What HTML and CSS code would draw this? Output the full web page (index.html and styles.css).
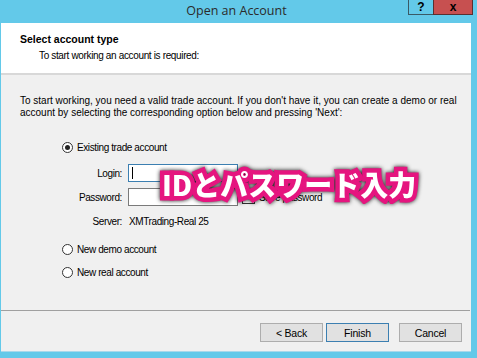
FILE: index.html
```html
<!DOCTYPE html>
<html lang="ja">
<head>
    <meta charset="UTF-8">
    <meta name="viewport" content="width=device-width, initial-scale=1.0">
    <title>Open an Account</title>
    <link rel="stylesheet" href="styles.css">
</head>
<body>
    <div class="window">
        <div class="titlebar">
            <span class="title">Open an Account</span>
            <div class="caption-buttons">
                <span class="cap-btn help">?</span>
                <span class="cap-btn close">x</span>
            </div>
        </div>
        <div class="client">
            <div class="header">
                <div class="header-title">Select account type</div>
                <div class="header-sub">To start working an account is required:</div>
            </div>
            <div class="body">
                <p class="intro">To start working, you need a valid trade account. If you don't have it, you can create a demo or real<br>account by selecting the corresponding option below and pressing 'Next':</p>
                <div class="options">
                    <label class="radio-row"><span class="radio checked"></span>Existing trade account</label>
                    <div class="fields">
                        <div class="field-row">
                            <span class="field-label">Login:</span>
                            <span class="input focused"><span class="caret"></span></span>
                        </div>
                        <div class="field-row">
                            <span class="field-label">Password:</span>
                            <span class="input"></span>
                            <span class="check"></span>
                            <span class="check-label">Save password</span>
                        </div>
                        <div class="field-row">
                            <span class="field-label">Server:</span>
                            <span class="server">XMTrading-Real 25</span>
                        </div>
                    </div>
                    <label class="radio-row gap-top"><span class="radio"></span>New demo account</label>
                    <label class="radio-row"><span class="radio"></span>New real account</label>
                </div>
            </div>
            <div class="footer">
                <button class="btn">&lt; Back</button>
                <button class="btn default">Finish</button>
                <button class="btn cancel">Cancel</button>
            </div>
        </div>
        <div class="overlay">IDとパスワード入力</div>
    </div>
</body>
</html>
```

FILE: styles.css
```css
* {
    margin: 0;
    padding: 0;
    box-sizing: border-box;
}
body, html {
    width: 477px;
    height: 358px;
    overflow: hidden;
    background-color: #63c9e9;
    font-family: "Liberation Sans", Arial, sans-serif;
    font-size: 10px;
    color: #000;
}
.window {
    position: relative;
    width: 477px;
    height: 358px;
    display: flex;
    flex-direction: column;
}
.titlebar {
    height: 23px;
    position: relative;
    display: flex;
    justify-content: center;
    align-items: center;
}
.title {
    font-family: "Open Sans", "Noto Sans", sans-serif;
    font-size: 12.5px;
    color: #2b2b2b;
    margin-top: -2px;
    margin-left: -4px;
}
.caption-buttons {
    position: absolute;
    top: 0;
    left: 408px;
    display: flex;
}
.cap-btn {
    height: 15px;
    border: 1px solid #3a5a66;
    border-top: none;
    display: flex;
    justify-content: center;
    align-items: center;
    font-weight: bold;
    font-size: 12px;
    color: #000;
}
.help {
    width: 25px;
    background-color: #63c9e9;
    border-right: none;
}
.close {
    width: 40px;
    background-color: #c75050;
    border-color: #5a3030;
}
.client {
    margin: 0 6px 0 1px;
    height: 329px;
    background-color: #f0f0f0;
    display: flex;
    flex-direction: column;
    border-bottom: 1px solid #a8d8ea;
}
.header {
    height: 52px;
    background-color: #fff;
    border-bottom: 2px solid #d8d8d8;
    padding: 10px 0 0 19px;
}
.header-title {
    font-weight: bold;
    font-size: 10.5px;
    line-height: 13px;
}
.header-sub {
    padding-left: 19px;
    margin-top: 3px;
    line-height: 13px;
    letter-spacing: -0.35px;
}
.body {
    flex: 1;
    padding: 20px 0 0 19px;
}
.intro {
    line-height: 12px;
    white-space: nowrap;
}
.options {
    padding: 19px 0 0 42px;
    letter-spacing: -0.4px;
}
.radio-row {
    display: flex;
    align-items: center;
    height: 18px;
}
.radio {
    width: 11px;
    height: 11px;
    border: 1px solid #333;
    border-radius: 50%;
    background-color: #fff;
    margin-right: 4px;
    display: flex;
    justify-content: center;
    align-items: center;
}
.radio.checked::after {
    content: "";
    width: 5px;
    height: 5px;
    border-radius: 50%;
    background-color: #222;
}
.gap-top {
    margin-top: 10px;
}
.radio-row + .radio-row {
    margin-top: 5px;
}
.fields {
    padding-top: 8px;
}
.field-row {
    display: flex;
    align-items: center;
    height: 18px;
    margin-bottom: 6px;
}
.field-label {
    flex: none;
    width: 66px;
    text-align: right;
    padding-right: 6px;
}
.input {
    width: 110px;
    height: 18px;
    background-color: #fff;
    border: 1px solid #7a7a7a;
    display: flex;
    align-items: center;
    padding-left: 3px;
}
.input.focused {
    border-color: #3c7fb1;
}
.caret {
    width: 1px;
    height: 12px;
    background-color: #000;
}
.check {
    width: 13px;
    height: 13px;
    border: 1px solid #333;
    background-color: #fff;
    margin: 0 4px 0 4px;
}
.server {
    padding-left: 1px;
}
.footer {
    height: 41px;
    border-top: 1px solid #a0a0a0;
    margin: 0 1px 0 0;
    display: flex;
    justify-content: flex-end;
    align-items: flex-start;
    padding: 12px 8px 0 0;
    gap: 3px;
}
.btn {
    width: 63px;
    height: 19px;
    font-family: "Liberation Sans", Arial, sans-serif;
    font-size: 10.5px;
    letter-spacing: -0.2px;
    background-color: #e1e1e1;
    border: 1px solid #adadad;
    color: #000;
}
.btn.default {
    border-color: #3c7fb1;
}
.btn.cancel {
    margin-left: 7px;
}
.overlay {
    position: absolute;
    left: 162px;
    top: 164px;
    font-family: "Noto Sans CJK JP", sans-serif;
    font-weight: 900;
    font-size: 28px;
    line-height: 40px;
    color: #fff;
    -webkit-text-stroke: 9px #e5157f;
    paint-order: stroke fill;
    filter: drop-shadow(0 0 2px rgba(0, 0, 0, 0.9));
    white-space: nowrap;
}
```
